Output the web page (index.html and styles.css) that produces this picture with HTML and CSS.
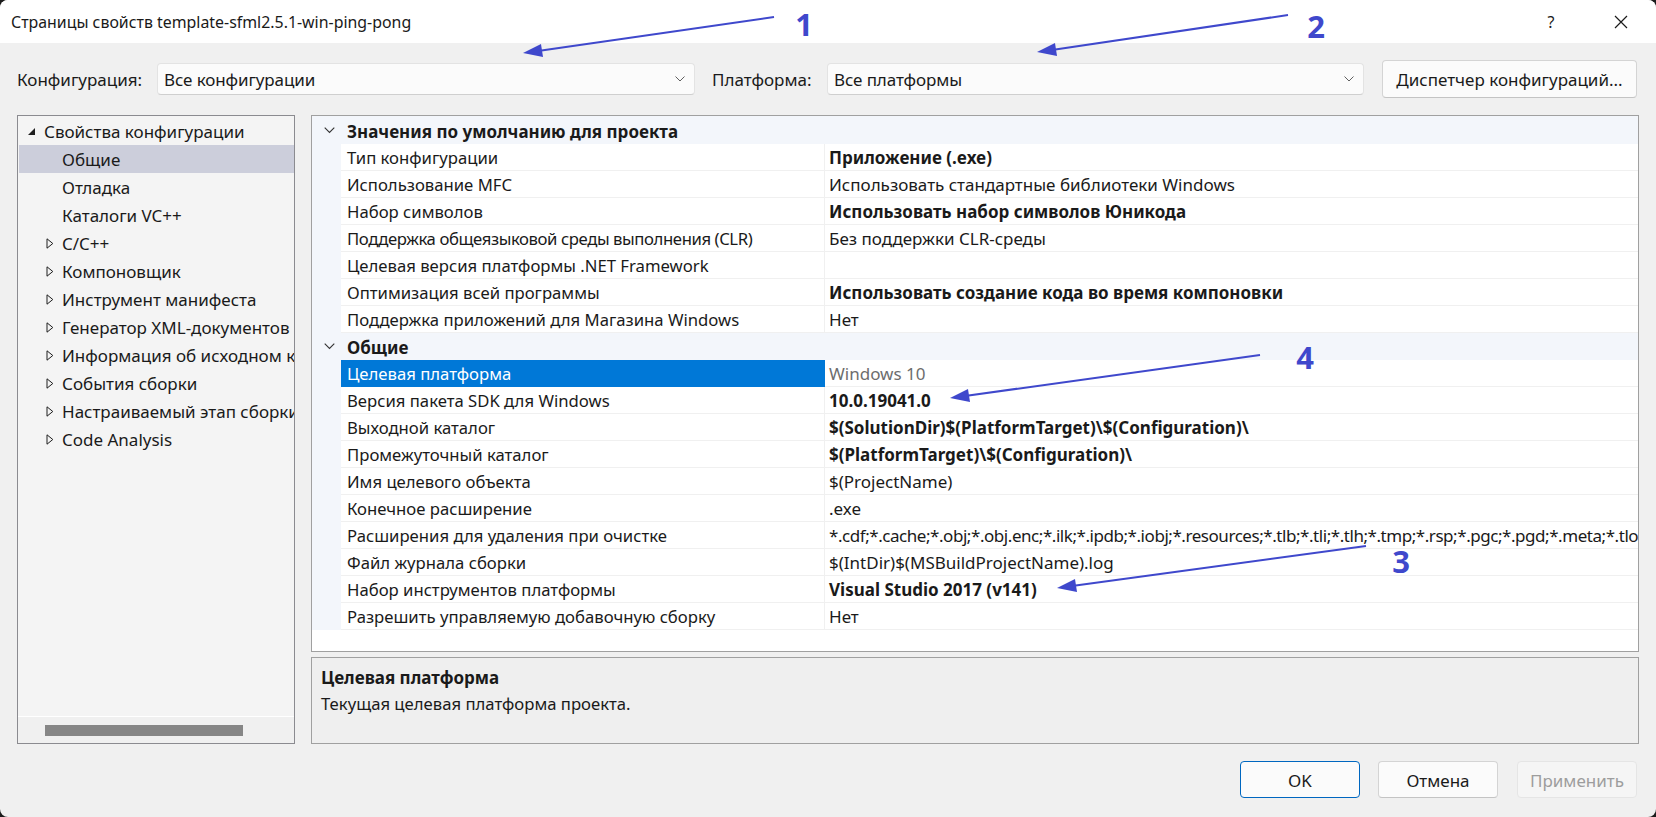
FILE: index.html
```html
<!DOCTYPE html>
<html lang="ru">
<head>
<meta charset="utf-8">
<title>Страницы свойств</title>
<link rel="stylesheet" href="styles.css">
</head>
<body>
<div class="window">
  <div class="titlebar">
    <div class="title">Страницы свойств template-sfml2.5.1-win-ping-pong</div>
    <div class="tb-help">?</div>
    <div class="tb-close">
      <svg width="16" height="16" viewBox="0 0 16 16"><path d="M2 2 L14 14 M14 2 L2 14" stroke="#1a1a1a" stroke-width="1.2" fill="none"/></svg>
    </div>
  </div>

  <div class="toolbar">
    <div class="tlabel tlabel-conf">Конфигурация:</div>
    <div class="combo combo-conf">
      <span>Все конфигурации</span>
      <svg class="combo-arrow" width="10" height="6" viewBox="0 0 10 6"><path d="M0.5 0.5 L5 5 L9.5 0.5" stroke="#606060" stroke-width="1" fill="none"/></svg>
    </div>
    <div class="tlabel tlabel-plat">Платформа:</div>
    <div class="combo combo-plat">
      <span>Все платформы</span>
      <svg class="combo-arrow" width="10" height="6" viewBox="0 0 10 6"><path d="M0.5 0.5 L5 5 L9.5 0.5" stroke="#606060" stroke-width="1" fill="none"/></svg>
    </div>
    <button class="btn btn-manager">Диспетчер конфигураций...</button>
  </div>

  <div class="main">
    <div class="tree">
      <div class="tree-items">
        <div class="titem top"><svg class="tri" width="9" height="9" viewBox="0 0 9 9"><path d="M8 1 L8 8 L1 8 Z" fill="#1e1e1e"/></svg><span>Свойства конфигурации</span></div>
        <div class="titem child selected"><span>Общие</span></div>
        <div class="titem child"><span>Отладка</span></div>
        <div class="titem child"><span>Каталоги VC++</span></div>
        <div class="titem child exp"><svg class="tri2" width="8" height="11" viewBox="0 0 8 11"><path d="M1 0.8 L6.8 5.5 L1 10.2 Z" stroke="#1e1e1e" stroke-width="1" fill="none"/></svg><span>C/C++</span></div>
        <div class="titem child exp"><svg class="tri2" width="8" height="11" viewBox="0 0 8 11"><path d="M1 0.8 L6.8 5.5 L1 10.2 Z" stroke="#1e1e1e" stroke-width="1" fill="none"/></svg><span>Компоновщик</span></div>
        <div class="titem child exp"><svg class="tri2" width="8" height="11" viewBox="0 0 8 11"><path d="M1 0.8 L6.8 5.5 L1 10.2 Z" stroke="#1e1e1e" stroke-width="1" fill="none"/></svg><span>Инструмент манифеста</span></div>
        <div class="titem child exp"><svg class="tri2" width="8" height="11" viewBox="0 0 8 11"><path d="M1 0.8 L6.8 5.5 L1 10.2 Z" stroke="#1e1e1e" stroke-width="1" fill="none"/></svg><span>Генератор XML-документов</span></div>
        <div class="titem child exp"><svg class="tri2" width="8" height="11" viewBox="0 0 8 11"><path d="M1 0.8 L6.8 5.5 L1 10.2 Z" stroke="#1e1e1e" stroke-width="1" fill="none"/></svg><span>Информация об исходном коде</span></div>
        <div class="titem child exp"><svg class="tri2" width="8" height="11" viewBox="0 0 8 11"><path d="M1 0.8 L6.8 5.5 L1 10.2 Z" stroke="#1e1e1e" stroke-width="1" fill="none"/></svg><span>События сборки</span></div>
        <div class="titem child exp"><svg class="tri2" width="8" height="11" viewBox="0 0 8 11"><path d="M1 0.8 L6.8 5.5 L1 10.2 Z" stroke="#1e1e1e" stroke-width="1" fill="none"/></svg><span>Настраиваемый этап сборки</span></div>
        <div class="titem child exp"><svg class="tri2" width="8" height="11" viewBox="0 0 8 11"><path d="M1 0.8 L6.8 5.5 L1 10.2 Z" stroke="#1e1e1e" stroke-width="1" fill="none"/></svg><span>Code Analysis</span></div>
      </div>
      <div class="hscroll"><div class="hthumb"></div></div>
    </div>

    <div class="right">
      <div class="grid">
        <div class="ghead first">
          <svg class="chev" width="11" height="7" viewBox="0 0 11 7"><path d="M0.7 0.7 L5.5 5.5 L10.3 0.7" stroke="#333" stroke-width="1.1" fill="none"/></svg>
          <span>Значения по умолчанию для проекта</span>
        </div>
        <div class="grow"><div class="gk">Тип конфигурации</div><div class="gv b">Приложение (.exe)</div></div>
        <div class="grow"><div class="gk">Использование MFC</div><div class="gv">Использовать стандартные библиотеки Windows</div></div>
        <div class="grow"><div class="gk">Набор символов</div><div class="gv b">Использовать набор символов Юникода</div></div>
        <div class="grow"><div class="gk tight">Поддержка общеязыковой среды выполнения (CLR)</div><div class="gv">Без поддержки CLR-среды</div></div>
        <div class="grow"><div class="gk">Целевая версия платформы .NET Framework</div><div class="gv"></div></div>
        <div class="grow"><div class="gk">Оптимизация всей программы</div><div class="gv b">Использовать создание кода во время компоновки</div></div>
        <div class="grow"><div class="gk">Поддержка приложений для Магазина Windows</div><div class="gv">Нет</div></div>
        <div class="ghead">
          <svg class="chev" width="11" height="7" viewBox="0 0 11 7"><path d="M0.7 0.7 L5.5 5.5 L10.3 0.7" stroke="#333" stroke-width="1.1" fill="none"/></svg>
          <span>Общие</span>
        </div>
        <div class="grow sel"><div class="gk">Целевая платформа</div><div class="gv ro">Windows 10</div></div>
        <div class="grow"><div class="gk">Версия пакета SDK для Windows</div><div class="gv b">10.0.19041.0</div></div>
        <div class="grow"><div class="gk">Выходной каталог</div><div class="gv b">$(SolutionDir)$(PlatformTarget)\$(Configuration)\</div></div>
        <div class="grow"><div class="gk">Промежуточный каталог</div><div class="gv b">$(PlatformTarget)\$(Configuration)\</div></div>
        <div class="grow"><div class="gk">Имя целевого объекта</div><div class="gv">$(ProjectName)</div></div>
        <div class="grow"><div class="gk">Конечное расширение</div><div class="gv">.exe</div></div>
        <div class="grow"><div class="gk">Расширения для удаления при очистке</div><div class="gv tight">*.cdf;*.cache;*.obj;*.obj.enc;*.ilk;*.ipdb;*.iobj;*.resources;*.tlb;*.tli;*.tlh;*.tmp;*.rsp;*.pgc;*.pgd;*.meta;*.tlog;*.manifest;*.res;*.pch;*.exp;*.idb;*.rep;*.xdc;*.pdb</div></div>
        <div class="grow"><div class="gk">Файл журнала сборки</div><div class="gv">$(IntDir)$(MSBuildProjectName).log</div></div>
        <div class="grow"><div class="gk">Набор инструментов платформы</div><div class="gv b">Visual Studio 2017 (v141)</div></div>
        <div class="grow"><div class="gk">Разрешить управляемую добавочную сборку</div><div class="gv">Нет</div></div>
      </div>
      <div class="desc">
        <div class="desc-title">Целевая платформа</div>
        <div class="desc-text">Текущая целевая платформа проекта.</div>
      </div>
    </div>
  </div>

  <div class="footer">
    <button class="btn fbtn ok">OK</button>
    <button class="btn fbtn">Отмена</button>
    <button class="btn fbtn disabled">Применить</button>
  </div>

  <svg class="annot" width="1656" height="817" viewBox="0 0 1656 817">
    <g stroke="#3f48cc" stroke-width="2" fill="#3f48cc">
      <line x1="774" y1="17" x2="538" y2="51"/>
      <path d="M523 53 L541 44 L543 57 Z" stroke="none"/>
      <line x1="1288" y1="15" x2="1052" y2="50"/>
      <path d="M1037 52 L1055 43 L1057 56 Z" stroke="none"/>
      <line x1="1260" y1="355" x2="965" y2="396"/>
      <path d="M950 398 L968 389 L970 402 Z" stroke="none"/>
      <line x1="1366" y1="546" x2="1072" y2="586"/>
      <path d="M1057 588 L1075 579 L1077 592 Z" stroke="none"/>
    </g>
    <g class="annot-num">
      <text x="804" y="36" text-anchor="middle">1</text>
      <text x="1316" y="38" text-anchor="middle">2</text>
      <text x="1401" y="573" text-anchor="middle">3</text>
      <text x="1305" y="369" text-anchor="middle">4</text>
    </g>
  </svg>
</div>
</body>
</html>
```

FILE: styles.css
```css
html, body {
  margin: 0;
  padding: 0;
}
body {
  width: 1656px;
  height: 817px;
  overflow: hidden;
  background: #1c1c1c;
  font-family: "Noto Sans", "Open Sans", sans-serif;
  font-size: 17px;
  color: #1a1a1a;
}
.window {
  position: relative;
  width: 1656px;
  height: 817px;
  background: #f0f0f0;
  border-radius: 8px;
  overflow: hidden;
  display: flex;
  flex-direction: column;
}

/* title bar */
.titlebar {
  height: 43px;
  background: #ffffff;
  display: flex;
  align-items: center;
  flex-shrink: 0;
}
.title {
  padding-left: 11px;
  font-size: 15.9px;
  flex: 1;
  white-space: nowrap;
  padding-top: 1px;
}
.tb-help {
  width: 20px;
  text-align: center;
  font-size: 16px;
  color: #1a1a1a;
  margin-right: 52px;
}
.tb-close {
  width: 16px;
  height: 16px;
  margin-right: 27px;
  display: flex;
}

/* toolbar */
.toolbar {
  height: 72px;
  display: flex;
  align-items: center;
  padding-left: 17px;
  flex-shrink: 0;
}
.tlabel {
  white-space: nowrap;
  font-size: 17px;
  padding-top: 1px;
}
.tlabel-conf { width: 140px; }
.tlabel-plat { width: 115px; margin-left: 17px; }
.combo {
  height: 32px;
  box-sizing: border-box;
  background: #fbfbfb;
  border: 1px solid #e3e3e3;
  border-bottom-color: #cfcfcf;
  border-radius: 4px;
  display: flex;
  align-items: center;
  padding-left: 6px;
  padding-right: 9px;
  font-size: 17px;
}
.combo span { flex: 1; padding-top: 1px; letter-spacing: -0.1px; }
.combo-conf { width: 538px; }
.combo-plat { width: 537px; }
.combo-arrow { flex-shrink: 0; }

.btn {
  font-family: "Noto Sans", "Open Sans", sans-serif;
  font-size: 17px;
  color: #1a1a1a;
  background: #fbfbfb;
  border: 1px solid #d4d4d4;
  border-bottom-color: #c4c4c4;
  border-radius: 4px;
  padding: 1px 0 0 0;
  box-sizing: border-box;
}
.btn-manager {
  width: 255px;
  height: 38px;
  margin-left: 18px;
}

/* main */
.main {
  display: flex;
  height: 629px;
  padding-left: 17px;
  gap: 16px;
  flex-shrink: 0;
}
.tree {
  width: 278px;
  height: 629px;
  box-sizing: border-box;
  border: 1px solid #8b8b90;
  background: #f4f4f4;
  display: flex;
  flex-direction: column;
}
.tree-items {
  flex: 1;
  padding-top: 1px;
  overflow: hidden;
}
.titem {
  height: 28px;
  display: flex;
  align-items: center;
  white-space: nowrap;
  overflow: hidden;
  margin-left: 1px;
}
.titem span { padding-top: 1px; }
.titem.top { padding-left: 8px; }
.titem.top .tri { margin-right: 8px; flex-shrink: 0; }
.titem.child { padding-left: 43px; }
.titem.exp { padding-left: 27px; }
.titem.exp .tri2 { margin-right: 8px; flex-shrink: 0; }
.titem.selected { background: #cccedb; }
.hscroll {
  height: 26px;
  border-top: 1px solid #ffffff;
  background: #f0f0f0;
  display: flex;
  align-items: center;
  padding-left: 27px;
}
.hthumb {
  width: 198px;
  height: 11px;
  background: #868686;
}

.right {
  width: 1328px;
  display: flex;
  flex-direction: column;
  gap: 5px;
}
.grid {
  height: 537px;
  box-sizing: border-box;
  border: 1px solid #a0a0a0;
  background: #ffffff;
  overflow: hidden;
}
.ghead {
  height: 27px;
  background: #f3f6fb;
  display: flex;
  align-items: center;
  font-weight: bold;
  font-size: 17px;
}
.ghead span { padding-top: 2px; }
.ghead.first { height: 28px; }
.ghead .chev {
  margin-left: 12px;
  margin-right: 12px;
  flex-shrink: 0;
}
.grow {
  height: 27px;
  display: flex;
  padding-left: 29px;
  background: #f3f6fb;
}
.gk, .gv {
  box-sizing: border-box;
  height: 27px;
  line-height: 27px;
  border-bottom: 1px solid #f0f0f0;
  background: #ffffff;
  white-space: nowrap;
  overflow: hidden;
}
.gk {
  width: 484px;
  padding-left: 6px;
  border-right: 1px solid #f0f0f0;
  font-size: 16.7px;
}
.gk.tight { letter-spacing: -0.4px; }
.gv {
  flex: 1;
  padding-left: 4px;
  font-size: 17px;
}
.gv.tight { letter-spacing: -0.45px; }
.gv.b { font-weight: bold; }
.gv.ro { color: #6d6d6d; }
.grow.sel .gk {
  background: #0078d7;
  color: #ffffff;
  border-bottom-color: #0078d7;
  border-right-color: #0078d7;
}

.desc {
  height: 87px;
  box-sizing: border-box;
  border: 1px solid #a0a0a0;
  background: #efefef;
  padding: 7px 9px;
}
.desc-title {
  font-weight: bold;
  font-size: 17px;
  line-height: 26px;
}
.desc-text {
  font-size: 16.7px;
  line-height: 26px;
}

/* footer */
.footer {
  display: flex;
  justify-content: flex-end;
  padding-top: 17px;
  padding-right: 19px;
  gap: 18px;
}
.fbtn {
  width: 120px;
  height: 37px;
}
.fbtn.ok {
  border: 1px solid #0067c0;
}
.fbtn.disabled {
  color: #9d9d9d;
  background: #f5f5f5;
  border-color: #e5e5e5;
  margin-left: 1px;
}

/* annotations */
.annot {
  position: absolute;
  left: 0;
  top: 0;
  pointer-events: none;
}
.annot-num text {
  font-family: "Open Sans", "Noto Sans", sans-serif;
  font-weight: bold;
  font-size: 31px;
  fill: #3f48cc;
}
```
